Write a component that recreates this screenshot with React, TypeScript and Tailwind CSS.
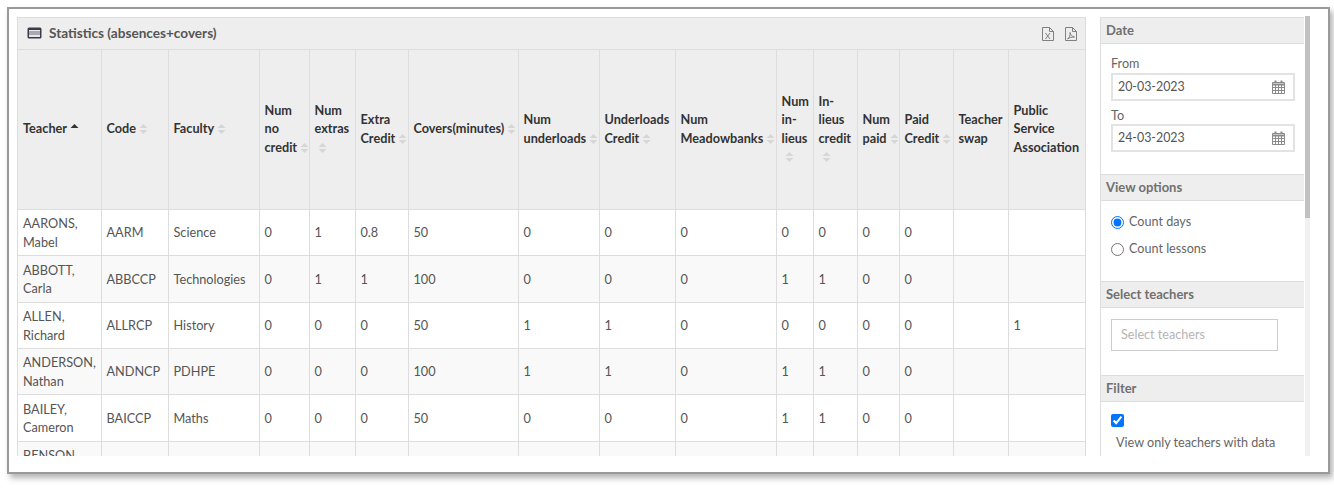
const columns = [
  { label: "Teacher", width: 83, sort: "asc" },
  { label: "Code", width: 67, sort: "both" },
  { label: "Faculty", width: 91, sort: "both" },
  { label: "Num no credit", width: 50, sort: "both" },
  { label: "Num extras", width: 46, sort: "both", wrapIcon: true },
  { label: "Extra Credit", width: 53, sort: "both" },
  { label: "Covers(minutes)", width: 110, sort: "both" },
  { label: "Num underloads", width: 81, sort: "both" },
  { label: "Underloads Credit", width: 76, sort: "both" },
  { label: "Num Meadowbanks", width: 101, sort: "both" },
  { label: "Num in-lieus", width: 37, sort: "both", wrapIcon: true },
  { label: "In-lieus credit", width: 44, sort: "both", wrapIcon: true },
  { label: "Num paid", width: 42, sort: "both" },
  { label: "Paid Credit", width: 54, sort: "both" },
  { label: "Teacher swap", width: 55 },
  { label: "Public Service Association", width: 77 },
];

const rows = [
  ["AARONS, Mabel", "AARM", "Science", "0", "1", "0.8", "50", "0", "0", "0", "0", "0", "0", "0", "", ""],
  ["ABBOTT, Carla", "ABBCCP", "Technologies", "0", "1", "1", "100", "0", "0", "0", "1", "1", "0", "0", "", ""],
  ["ALLEN, Richard", "ALLRCP", "History", "0", "0", "0", "50", "1", "1", "0", "0", "0", "0", "0", "", "1"],
  ["ANDERSON, Nathan", "ANDNCP", "PDHPE", "0", "0", "0", "100", "1", "1", "0", "1", "1", "0", "0", "", ""],
  ["BAILEY, Cameron", "BAICCP", "Maths", "0", "0", "0", "50", "0", "0", "0", "1", "1", "0", "0", "", ""],
  ["BENSON, Paul", "", "", "", "", "", "", "", "", "", "", "", "", "", "", ""],
];

const rowClasses = [
  "h-[46px] bg-white",
  "h-[47px] bg-[#f9f9f9]",
  "h-[46px] bg-white",
  "h-[46px] bg-[#f9f9f9]",
  "h-[47px] bg-white",
  "h-[46px] bg-[#f9f9f9]",
];

// takes no room in the line, so the header text wraps as if it was not there
const SortIcon = ({ active }: { active?: boolean }) => (
  <svg width="9" height="12" viewBox="0 0 9 12" className="inline-block ml-[3px] -mr-[12px] align-[-2px]">
    {active ? (
      <path d="M0.5 5 L4.5 1 L8.5 5 Z" fill="#333333" />
    ) : (
      <>
        <path d="M0.5 5 L4.5 1 L8.5 5 Z" fill="#d6d6d6" />
        <path d="M0.5 7 L4.5 11 L8.5 7 Z" fill="#d6d6d6" />
      </>
    )}
  </svg>
);

const FileIcon = ({ letter }: { letter: string }) => (
  <svg width="12" height="14" viewBox="0 0 12 14" fill="none" stroke="#808080" strokeWidth="1">
    <path d="M0.5 0.5 H7.5 L11.5 4.5 V13.5 H0.5 Z" />
    <path d="M7.5 0.5 V4.5 H11.5" />
    {letter === "x" ? (
      <path d="M3.5 6 L8 12 M8 6 L3.5 12" />
    ) : (
      <path d="M2.5 12 C4.5 10.5 5.5 8 5 5.5 C5.5 8 7 9.5 9.5 10 C7 10 4.5 10.5 2.5 12 Z" />
    )}
  </svg>
);

const CalendarIcon = () => (
  <svg width="13" height="14" viewBox="0 0 13 14" fill="none" stroke="#8a8a8a" strokeWidth="1">
    <path d="M0.5 2.5 H12.5 V13.5 H0.5 Z" />
    <path d="M0.5 4.5 H12.5" strokeWidth="2" />
    <path d="M0.5 7.5 H12.5 M0.5 10.5 H12.5 M3.5 5 V13.5 M6.5 5 V13.5 M9.5 5 V13.5" />
    <path d="M3.5 0.5 V3 M9.5 0.5 V3" strokeWidth="2" />
  </svg>
);

const SectionHeader = ({ title }: { title: string }) => (
  <div className="h-[27px] bg-[#eeeeee] border-y border-[#dddddd] pl-[5px] text-[13px] font-bold leading-[25px] text-[#707070]">
    {title}
  </div>
);

const DateInput = ({ value }: { value: string }) => (
  <div className="h-[28px] w-[184px] border-2 border-[#e3e3e3] flex items-center justify-between pl-[5px] pr-[8px] text-[12.4px] text-[#555555]">
    <span>{value}</span>
    <CalendarIcon />
  </div>
);

export default function App() {
  return (
    <div className="w-[1334px] h-[489px] bg-white font-['Lato','Open_Sans',sans-serif] pt-[7px] pl-[7px]">
      <div className="w-[1323px] h-[467px] bg-white border-2 border-[#9a9a9a] shadow-[3px_4px_6px_rgba(0,0,0,0.3)] flex">
        <div className="w-[1091px] h-[447px] overflow-hidden pl-[8px] pt-[8px] shrink-0">
          <div className="w-[1069px] border border-[#dddddd] bg-white">
            <div className="h-[31px] bg-[#eeeeee] flex items-center justify-between pl-[9px] pr-[8px]">
              <div className="flex items-center gap-[7px] text-[13.6px] font-bold text-[#555555]">
                <svg width="15" height="12" viewBox="0 0 15 12">
                  <rect x="0.5" y="0.5" width="14" height="11" rx="1.5" fill="#3a3a4a" />
                  <rect x="2" y="3" width="11" height="7" fill="#e8e8e8" />
                  <path d="M2 5 H13 M2 7 H13" stroke="#6a6a7a" strokeWidth="1" />
                </svg>
                <span>Statistics (absences+covers)</span>
              </div>
              <div className="flex items-center gap-[11px]">
                <FileIcon letter="x" />
                <FileIcon letter="p" />
              </div>
            </div>
            <table className="table-fixed border-collapse w-[1067px] text-[12.7px] leading-[18.5px] text-[#555555]">
              <colgroup>
                {columns.map((col) => (
                  <col key={col.label} style={{ width: col.width }} />
                ))}
              </colgroup>
              <thead>
                <tr className="h-[160px] bg-[#eeeeee]">
                  {columns.map((col) => (
                    <th
                      key={col.label}
                      className="border border-[#dddddd] px-[5px] pb-[2px] text-left font-bold text-[#333333] align-middle first:border-l-0 last:border-r-0"
                    >
                      {col.label}
                      {col.wrapIcon && <br />}
                      {col.sort && <SortIcon active={col.sort === "asc"} />}
                    </th>
                  ))}
                </tr>
              </thead>
              <tbody>
                {rows.map((row, r) => (
                  <tr key={r} className={rowClasses[r]}>
                    {row.map((cell, c) => (
                      <td
                        key={c}
                        className="border border-[#dddddd] px-[5px] py-[4px] align-middle first:border-l-0 last:border-r-0"
                      >
                        {cell}
                      </td>
                    ))}
                  </tr>
                ))}
              </tbody>
            </table>
          </div>
        </div>
        <div className="w-[204px] h-[439px] overflow-hidden mt-[8px] border-l border-[#dddddd] shrink-0 text-[12.6px] text-[#666666]">
          <SectionHeader title="Date" />
          <div className="h-[130px] pl-[10px] pt-[11px] leading-[18px]">
            <div className="h-[18px]">From</div>
            <DateInput value="20-03-2023" />
            <div className="h-[18px] mt-[6px] -mb-[1px]">To</div>
            <DateInput value="24-03-2023" />
          </div>
          <SectionHeader title="View options" />
          <div className="h-[80px] pl-[10px] pt-[12px] flex flex-col gap-[9px]">
            <label className="flex items-center gap-[5px] h-[18px]">
              <input type="radio" name="view" defaultChecked className="w-[13px] h-[13px] m-0 accent-[#0075ff]" />
              Count days
            </label>
            <label className="flex items-center gap-[5px] h-[18px]">
              <input type="radio" name="view" className="w-[13px] h-[13px] m-0" />
              Count lessons
            </label>
          </div>
          <SectionHeader title="Select teachers" />
          <div className="h-[67px] pl-[10px] pt-[11px]">
            <div className="w-[167px] h-[32px] border border-[#cccccc] pl-[9px] leading-[29px] text-[#b5b5b5]">
              Select teachers
            </div>
          </div>
          <SectionHeader title="Filter" />
          <div className="pl-[10px] pt-[12px]">
            <input type="checkbox" defaultChecked className="block w-[13px] h-[13px] m-0 accent-[#0075ff]" />
            <div className="pl-[5px] mt-[7px]">View only teachers with data</div>
          </div>
        </div>
        <div className="w-[5px] h-[440px] ml-[1px] mt-[7px] bg-[#f1f1f1] shrink-0">
          <div className="w-[5px] h-[202px] bg-[#c1c1c1]" />
        </div>
      </div>
    </div>
  );
}
